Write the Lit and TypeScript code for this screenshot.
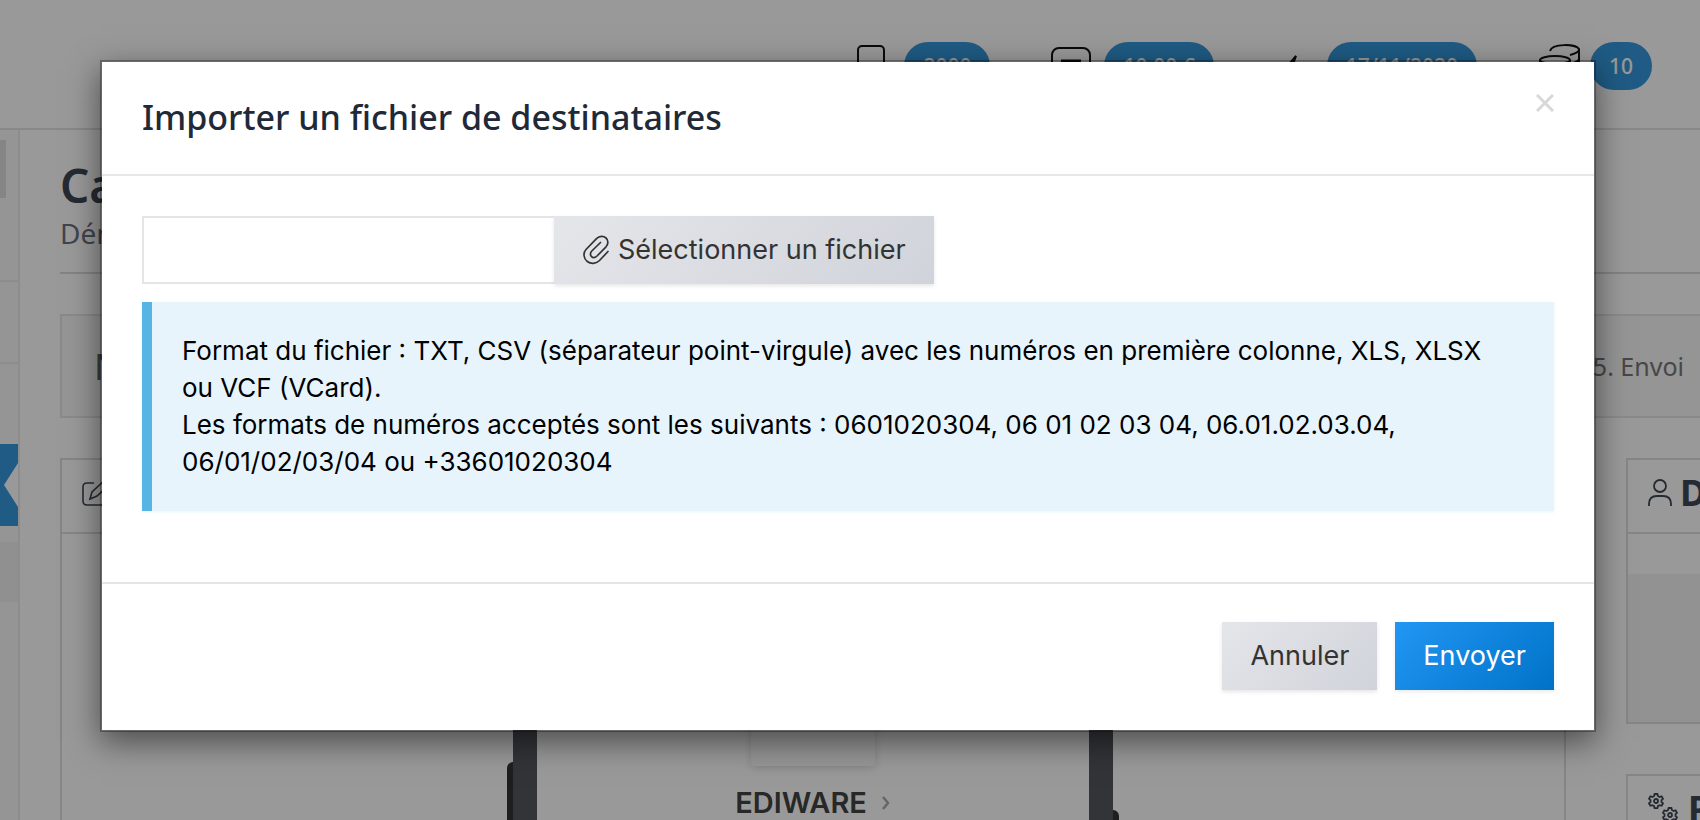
import { LitElement, html, css, svg } from "lit";
import { customElement, state } from "lit/decorators.js";

const icon = (cls: string, box: string, body: unknown) =>
  html`<svg class="icon ${cls}" viewBox=${box} fill="none" stroke="currentColor" aria-hidden="true">${body}</svg>`;

const gear = svg`<path d="M6.600 1h2.800l.5 2 1.700 1 2-.6 1.400 2.400-1.500 1.400v1.800l1.500 1.400-1.400 2.400-2-.6-1.700 1-.5 2H6.600l-.5-2-1.700-1-2 .6L1 10.400 2.500 9V7.200L1 5.800l1.400-2.400 2 .6 1.700-1z"/><circle cx="8" cy="8" r="2"/>`;

@customElement("app-backdrop-page")
class BackdropPage extends LitElement {
  static styles = css`
    :host { display: flex; flex-direction: column; height: 100%; overflow: hidden; color: #404654; font-family: "Noto Sans", sans-serif; }
    * { box-sizing: border-box; }
    .icon { display: block; flex: none; }
    .topbar { display: flex; flex: none; justify-content: flex-end; height: 130px; padding: 42px 48px 0 0; gap: 61px; border-bottom: 2px solid #e3e3e6; }
    .stat { display: flex; align-items: flex-start; color: #111; }
    .badge { height: 48px; padding: 0 19px; border-radius: 24px; background: #3598dc; color: #fff; font-size: 21px; line-height: 48px; font-weight: 500; }
    .phone { width: 28px; height: 48px; margin: 3px 19px 0 0; }
    .card { width: 40px; height: 42px; margin: 5px 13px 0 0; }
    .bolt { width: 26px; height: 42px; margin: 10px 26px 0 0; }
    .coins { width: 42px; height: 44px; margin: 2px 10px 0 0; }
    .body { display: flex; flex: 1; min-height: 0; }
    .side { display: flex; flex: none; flex-direction: column; width: 20px; background: #f8f8f8; border-right: 2px solid #ececec; }
    .side-search { width: 6px; height: 58px; margin-top: 10px; background: #dedede; }
    .side-item { height: 82px; border-top: 2px solid #ececec; }
    .side-gap { flex: none; height: 82px; }
    .side-active { display: flex; align-items: center; justify-content: flex-end; height: 82px; background: #3598dc; }
    .notch { width: 14px; height: 44px; background: #fff; clip-path: polygon(100% 0, 100% 100%, 0 50%); }
    .side-sub { height: 60px; margin-top: 16px; background: #f0f0f0; }
    .main { flex: 1; min-width: 0; padding: 30px 0 0 40px; }
    h1 { margin: 0; font-size: 46px; line-height: 50px; font-weight: 600; }
    .lead { margin: 6px 0 0; font-size: 28px; line-height: 34px; color: #6b7280; }
    .rule { margin-top: 22px; border-top: 2px solid #d9dcdc; }
    .steps { display: flex; align-items: center; justify-content: space-between; height: 104px; margin-top: 40px; padding: 0 16px 0 32px; border: 2px solid #e6e6e6; border-right: 0; background: #f9f9f9; color: #777; font-size: 25px; }
    .step-now { font-size: 36px; color: #666; }
    .columns { display: flex; gap: 60px; margin-top: 40px; }
    .panel { border: 2px solid #dcdfdf; }
    .editor { flex: 1; height: 500px; }
    .aside { display: flex; flex: none; flex-direction: column; gap: 50px; width: 74px; }
    .aside .panel { height: 266px; border-right: 0; }
    .panel-head { display: flex; align-items: center; gap: 8px; height: 74px; padding: 0 0 6px 20px; border-bottom: 2px solid #dcdfdf; overflow: hidden; }
    h2 { margin: 0; font-size: 36px; line-height: 44px; font-weight: 700; }
    .pen { width: 30px; height: 30px; }
    .user { width: 24px; height: 28px; }
    .gears { width: 32px; height: 32px; }
    .panel-fill { height: 148px; margin-top: 40px; background: #f3f3f3; }
    .handset { display: grid; grid-template-columns: 6px 24px 1fr 24px 6px; width: 612px; height: 400px; margin: 0 auto; }
    .key-left { height: 90px; margin-top: 228px; border-radius: 6px 0 0 6px; background: #333; }
    .key-right { height: 90px; margin-top: 276px; border-radius: 0 6px 6px 0; background: #333; }
    .rim { background: #56585e; }
    .screen { display: flex; flex-direction: column; align-items: center; padding-top: 80px; background: #fff; }
    .bubble { width: 124px; height: 152px; border-radius: 4px; background: #fafafa; box-shadow: 0 2px 8px rgba(0, 0, 0, 0.15); }
    .sender { display: flex; align-items: center; gap: 14px; margin-top: 20px; color: #444; font: 600 29px/34px Inter, sans-serif; }
    .chevron { width: 10px; height: 14px; color: #aaa; }
  `;

  render() {
    return html`
      <header class="topbar">
        <div class="stat">
          ${icon("phone", "0 0 28 48", svg`<rect x="1" y="1" width="26" height="46" rx="4" stroke-width="2"/><path d="M11 41h6" stroke-width="2"/>`)}
          <span class="badge">2000</span>
        </div>
        <div class="stat">
          ${icon("card", "0 0 40 42", svg`<rect x="1" y="1" width="38" height="40" rx="7" stroke-width="2"/><path d="M10 14h20M10 22h20" stroke-width="3"/>`)}
          <span class="badge">10,00 €</span>
        </div>
        <div class="stat">
          ${icon("bolt", "0 0 26 42", svg`<path d="M21 4 5 23h8l-5 17 15-22h-7z" stroke-width="2"/>`)}
          <span class="badge">17/11/2020</span>
        </div>
        <div class="stat">
          ${icon("coins", "0 0 42 44", svg`<g stroke-width="2"><path d="M12 7C14-1 38 0 41 5v24M41 6c-1 3-5 4-9 5M41 15c-1 3-5 4-9 5"/><ellipse cx="17" cy="16" rx="15" ry="4"/><path d="M2 16v20c0 6 30 6 30 0V16M2 26c0 6 30 6 30 0"/></g>`)}
          <span class="badge">10</span>
        </div>
      </header>
      <div class="body">
        <nav class="side">
          <div class="side-search"></div>
          <div class="side-gap"></div>
          <div class="side-item"></div>
          <div class="side-item"></div>
          <div class="side-active"><span class="notch"></span></div>
          <div class="side-sub"></div>
        </nav>
        <main class="main">
          <h1>Campagne</h1>
          <p class="lead">Démarrer</p>
          <div class="rule"></div>
          <div class="steps"><span class="step-now">N</span><span>5. Envoi</span></div>
          <div class="columns">
            <section class="panel editor">
              <div class="panel-head">
                ${icon("pen", "0 0 30 30", svg`<path d="M12 5H5q-4 0-4 4v14q0 4 4 4h18q4 0 4-4v-8M8 21l2-7L24 1l5 4-14 13-7 3z" stroke-width="1.600"/>`)}
              </div>
              <div class="handset">
                <span class="key-left"></span><span class="rim"></span>
                <div class="screen">
                  <div class="bubble"></div>
                  <div class="sender">EDIWARE ${icon("chevron", "0 0 10 14", svg`<path d="m2 1 5 6-5 6" stroke-width="2.500"/>`)}</div>
                </div>
                <span class="rim"></span><span class="key-right"></span>
              </div>
            </section>
            <div class="aside">
              <section class="panel">
                <div class="panel-head">
                  ${icon("user", "0 0 24 28", svg`<g stroke-width="1.800"><circle cx="12" cy="7" r="6"/><path d="M1 27v-2q0-8 8-8h6q8 0 8 8v2"/></g>`)}
                  <h2>D</h2>
                </div>
                <div class="panel-fill"></div>
              </section>
              <section class="panel">
                <div class="panel-head">
                  ${icon("gears", "0 0 32 32", svg`<g stroke-width="1.800">${gear}<g transform="translate(14 14)">${gear}</g></g>`)}
                  <h2>P</h2>
                </div>
              </section>
            </div>
          </div>
        </main>
      </div>
    `;
  }
}

@customElement("app-root")
class AppRoot extends LitElement {
  @state() fileName = "";

  static styles = css`
    :host { display: grid; height: 100vh; overflow: hidden; background: #fff; font-family: Inter, sans-serif; }
    * { box-sizing: border-box; }
    .page, .overlay { grid-area: 1 / 1; min-width: 0; min-height: 0; }
    .overlay { position: relative; display: flex; align-items: flex-start; padding: 60px 104px 0 100px; background: rgba(0, 0, 0, 0.4); }
    .modal { flex: 1; border: 2px solid rgba(0, 0, 0, 0.3); background: #fff; background-clip: padding-box; box-shadow: 0 10px 30px rgba(0, 0, 0, 0.5); }
    .head { display: flex; justify-content: space-between; align-items: flex-start; padding: 30px 40px 32px; border-bottom: 2px solid #e5e7ea; }
    h2 { margin: 0; color: #1f2937; font: 500 34px/50px "Noto Sans", sans-serif; }
    button { margin: 0; border: 0; border-radius: 0; font: 400 27px/68px Inter, sans-serif; color: #333; white-space: nowrap; cursor: pointer; }
    .close { display: block; width: 18px; height: 18px; margin-top: 2px; padding: 0; background: none; color: #d8d8d8; line-height: 18px; }
    .close svg { display: block; width: 18px; height: 18px; }
    .content { padding: 40px 40px 71px; }
    .picker { display: flex; }
    .name { width: 412px; height: 68px; padding: 0 20px; border: 2px solid #e5e5e5; border-right: 0; border-radius: 0; background: #fff; font: 27px/34px Inter, sans-serif; outline: none; }
    .grey { background: linear-gradient(135deg, #e5e6ea, #d0d3da); box-shadow: 0 2px 4px rgba(0, 0, 0, 0.1); }
    .pick { display: flex; align-items: center; gap: 8px; padding: 0 28px; }
    .clip { width: 28px; height: 30px; }
    .note { margin: 18px 0 0; padding: 30px 70px 31px 30px; border-left: 10px solid #57b5e3; background: #e7f4fc; color: #000; font-size: 26px; line-height: 37px; box-shadow: 0 1px 3px rgba(231, 244, 252, 0.9); }
    .foot { display: flex; justify-content: flex-end; gap: 18px; padding: 38px 40px 40px; border-top: 2px solid #e5e5e5; }
    .foot button { padding: 0 28px; }
    .foot .send { background: linear-gradient(135deg, #2196f3, #0073c8); color: #fff; box-shadow: 0 2px 4px rgba(0, 0, 0, 0.08); }
  `;

  render() {
    return html`
      <app-backdrop-page class="page"></app-backdrop-page>
      <div class="overlay">
        <div class="modal" role="dialog" aria-modal="true" aria-labelledby="title">
          <div class="head">
            <h2 id="title">Importer un fichier de destinataires</h2>
            <button class="close" aria-label="Fermer">
              <svg viewBox="0 0 18 18" fill="none" stroke="currentColor" stroke-width="3"><path d="m1 1 16 16M17 1 1 17"/></svg>
            </button>
          </div>
          <div class="content">
            <div class="picker">
              <input class="name" type="text" readonly aria-label="Fichier" .value=${this.fileName} />
              <button class="pick grey">
                <svg class="clip" viewBox="0 0 28 30" fill="none" stroke="currentColor" stroke-width="1.700" stroke-linecap="round"><path d="M26 16.500 17.500 25.500C14 29 9 29.300 5.300 26.500S.8 18 4 14.500L14.500 3.600C17.500.8 21.500.8 24 3s2.500 6 0 8.800L15 21c-1.800 1.700-4 2-5.500.6s-1.500-3.800.3-5.600L18.500 7.500"/></svg>
                Sélectionner un fichier
              </button>
            </div>
            <p class="note">
              Format du fichier : TXT, CSV (séparateur point-virgule) avec les numéros en première colonne, XLS, XLSX ou VCF (VCard).<br />
              Les formats de numéros acceptés sont les suivants : 0601020304, 06 01 02 03 04, 06.01.02.03.04, 06/01/02/03/04 ou +33601020304
            </p>
          </div>
          <div class="foot">
            <button class="grey">Annuler</button>
            <button class="send">Envoyer</button>
          </div>
        </div>
      </div>
    `;
  }
}
